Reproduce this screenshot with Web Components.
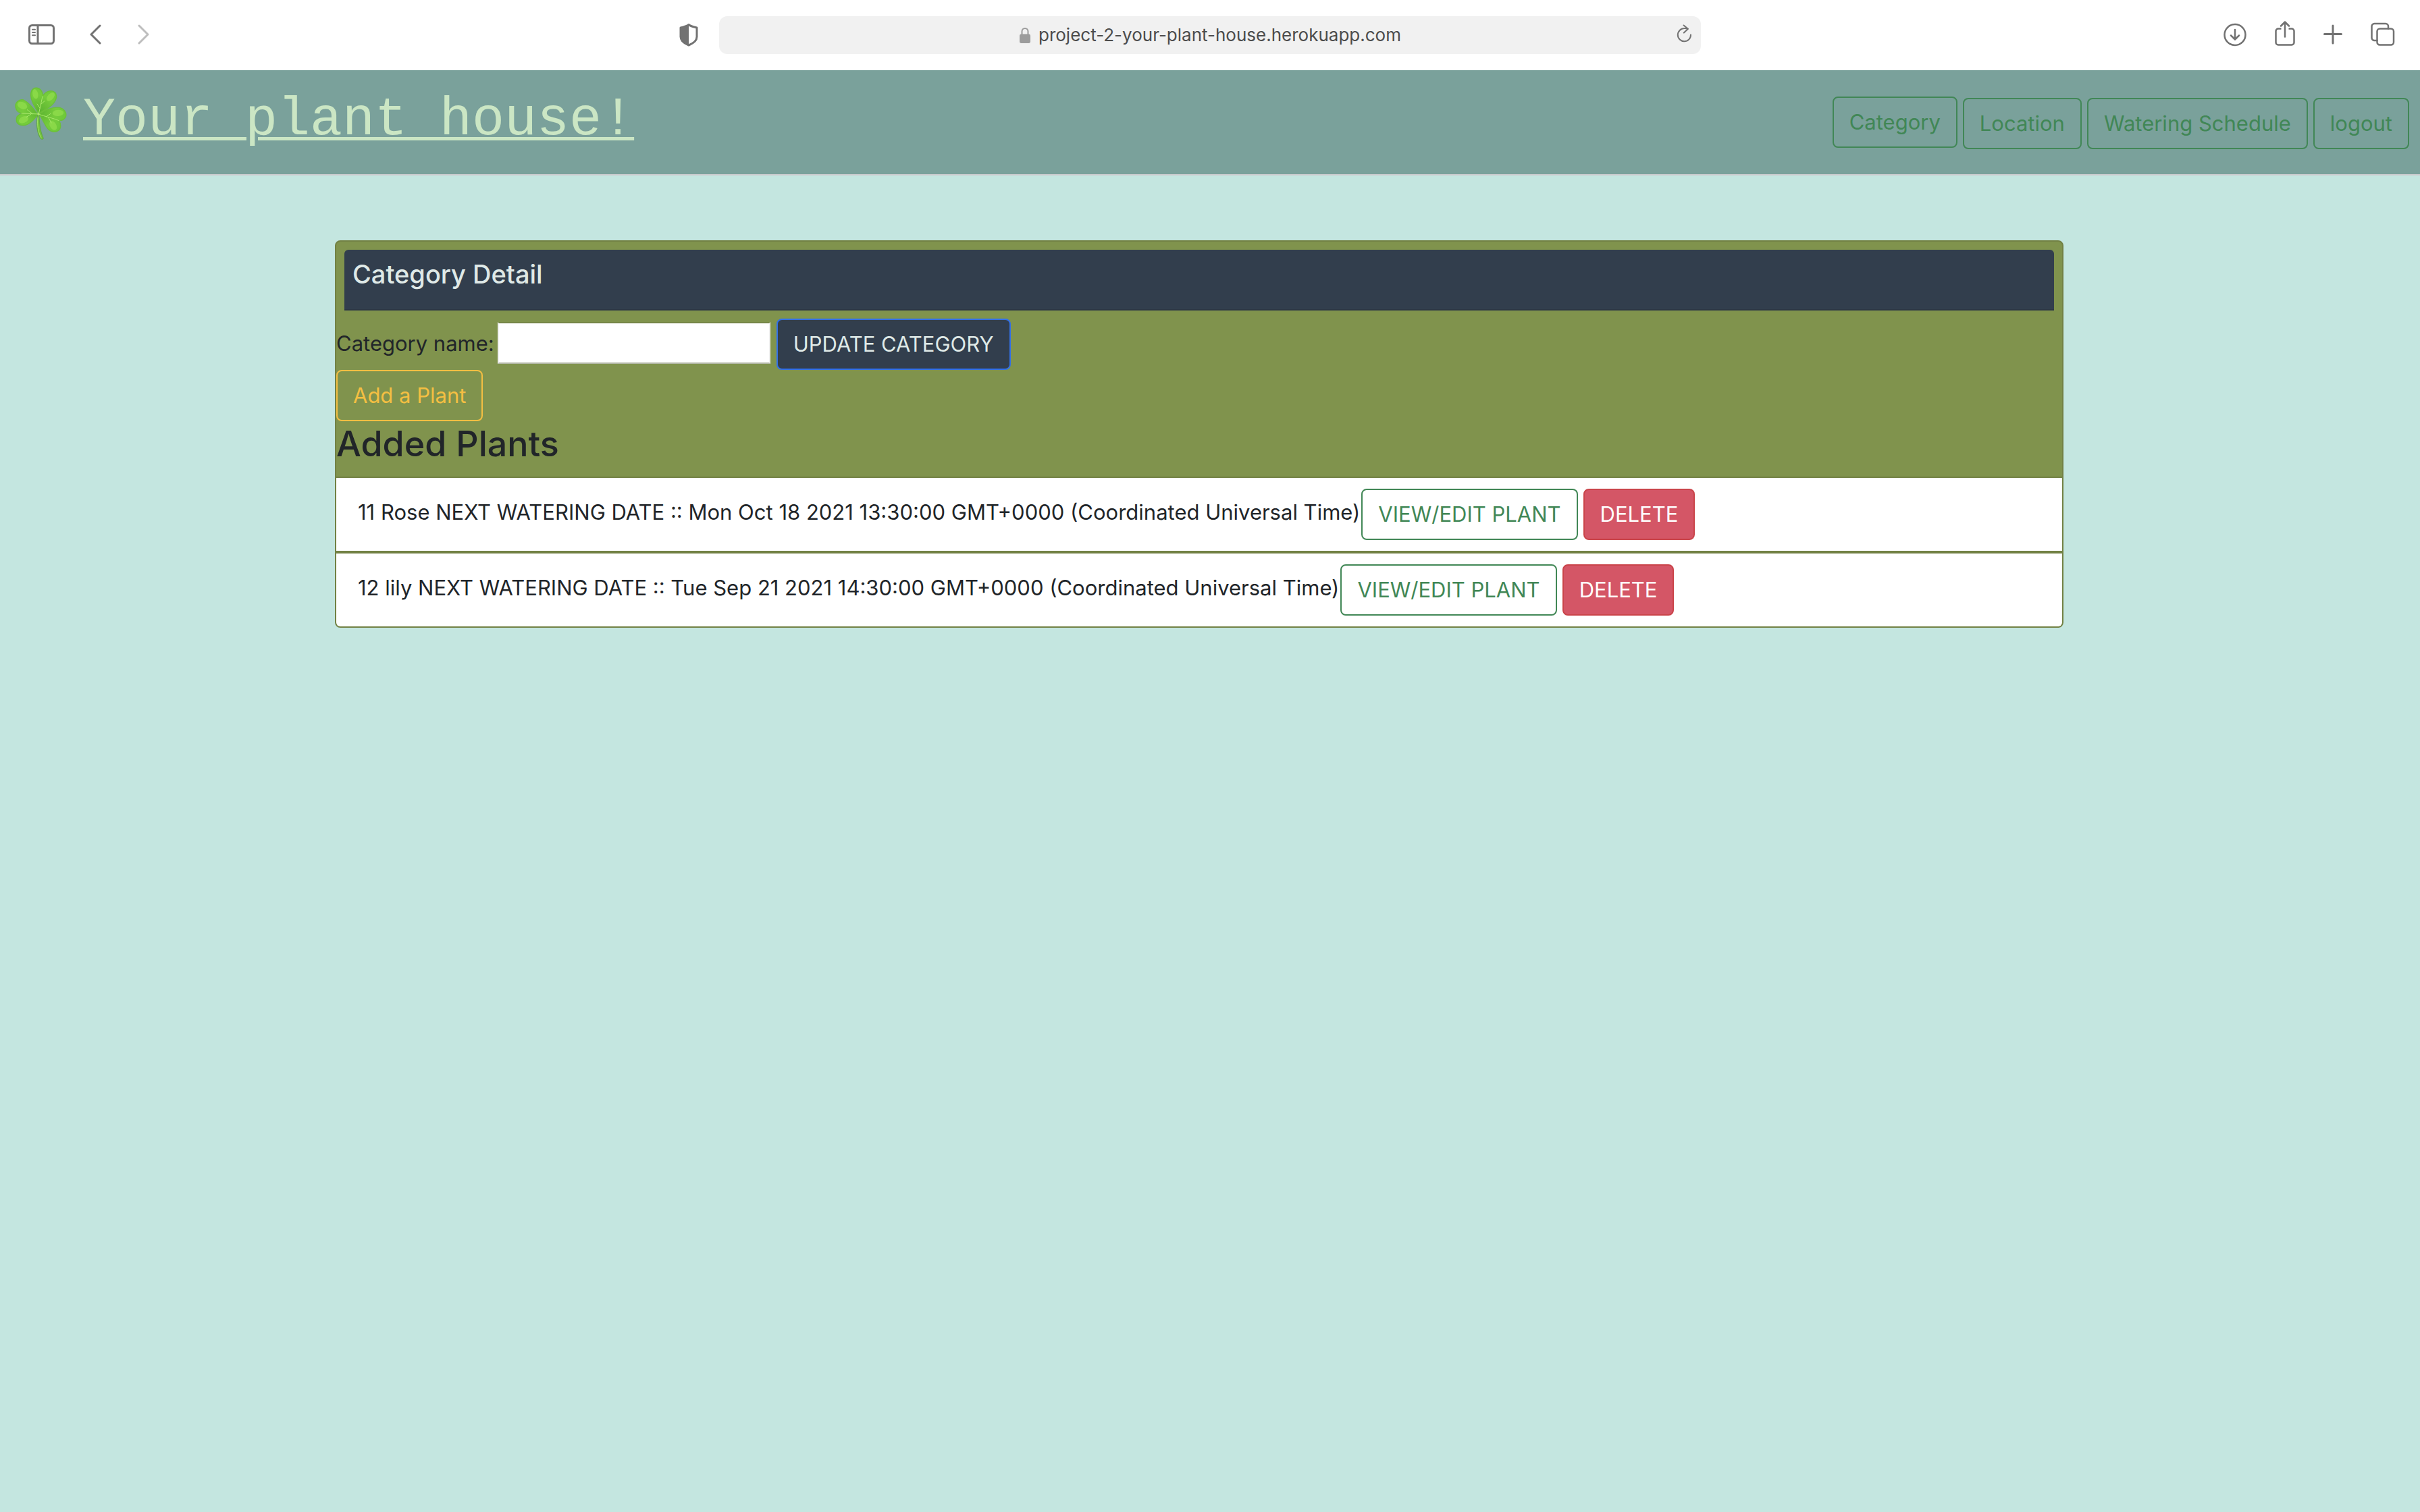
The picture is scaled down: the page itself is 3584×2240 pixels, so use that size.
<!DOCTYPE html>
<html lang="en">
<head>
<meta charset="utf-8">
<title>Your plant house!</title>
<style>
  :root {
    --ui: Inter, "Liberation Sans", sans-serif;
    --ink: #212529;
    --slate: #323e4d;
    --olive: #80934d;
    --olive-line: #728144;
    --success: #418756;
    --warning: #f4bf42;
    --pale: #dfe9e7;
  }
  html, body { margin: 0; min-height: 100%; }
  body { background: #c4e6e0; color: var(--ink); font: 400 31px/48px var(--ui); }
</style>
</head>
<body>
<plant-app></plant-app>

<script>
const define = (name, html) => {
  const template = document.createElement('template');
  template.innerHTML = html;
  customElements.define(name, class extends HTMLElement {
    constructor() {
      super();
      this.attachShadow({ mode: 'open' }).append(template.content.cloneNode(true));
    }
  });
};

/* Button in the outline, solid and danger looks */
define('plant-button', `
  <style>
    :host { display: block; flex: none; }
    button {
      display: block; box-sizing: border-box; margin: 0; padding: 12px 23px;
      border: 2px solid var(--success); border-radius: 8px; background: transparent;
      color: var(--success); font: inherit; white-space: nowrap; cursor: pointer;
    }
    :host([kind="warning"]) button { color: var(--warning); border-color: var(--warning); }
    :host([kind="primary"]) button { color: var(--pale); background: var(--slate); border-color: #3270e8; }
    :host([kind="danger"]) button { color: #fff; background: #d45666; border-color: #ca444a; }
  </style>
  <button type="button"><slot></slot></button>`);

define('browser-bar', `
  <style>
    :host {
      display: grid; grid-template-columns: 1fr minmax(0, 1454px) 1fr; align-items: center;
      height: 104px; background: #fff; color: #727272;
    }
    svg { display: block; height: 44px; fill: none; stroke: currentColor; stroke-width: 3; stroke-linecap: round; stroke-linejoin: round; }
    button { display: block; margin: 0; padding: 0; border: 0; background: none; color: inherit; }
    button:disabled { color: #bebebe; }
    .side { display: flex; align-items: center; gap: 52px; padding-left: 41px; }
    .shield { margin-left: auto; margin-right: 31px; }
    .tools { display: flex; align-items: center; justify-content: flex-end; gap: 42px; padding-right: 37px; }
    .field {
      display: grid; grid-template-columns: 1fr auto 1fr; align-items: center;
      height: 56px; border-radius: 12px; background: #f1f1f1;
    }
    .address { grid-column: 2; display: flex; align-items: center; gap: 12px; }
    .address svg { color: #9c9c9c; }
    input {
      width: 536px; height: 40px; box-sizing: border-box; margin: 0; padding: 0; border: 0; outline: 0;
      background: none; color: #4c4c4c; font: 400 26px/40px var(--ui);
    }
    .reload { justify-self: end; margin-right: 13px; }
    .reload svg { stroke-width: 2; }
  </style>
  <div class="side">
    <button aria-label="Sidebar"><svg width="40" viewBox="0 0 40 44"><rect x="2.5" y="7.5" width="36" height="27" rx="4"/><path d="M15 8v26"/><path d="M7 13.7h4M7 18h4M7 22.3h4" stroke-width="2"/></svg></button>
    <button aria-label="Back"><svg width="18" viewBox="0 0 18 44"><path d="M15 8 2 21 15 34"/></svg></button>
    <button aria-label="Forward" disabled><svg width="18" viewBox="0 0 18 44"><path d="M3 8 16 21 3 34"/></svg></button>
    <button class="shield" aria-label="Privacy report"><svg width="28" viewBox="0 0 28 44"><path d="M14 6.500C11 9 7 10 2 11V24.500C2 31 8 34.500 14 37C20 34.500 26 31 26 24.500V11C21 10 17 9 14 6.500Z"/><path d="M14 6.500C11 9 7 10 2 11V24.500C2 31 8 34.500 14 37Z" fill="currentColor" stroke="none"/></svg></button>
  </div>
  <div class="field">
    <div class="address">
      <svg width="16" viewBox="0 0 16 44"><path d="M3.500 21V16.500a4.500 4.500 0 0 1 9 0V21" stroke-width="2"/><rect x="0" y="20.500" width="16" height="13.500" rx="2.500" fill="currentColor" stroke="none"/></svg>
      <input type="text" aria-label="Address" value="project-2-your-plant-house.herokuapp.com">
    </div>
    <button class="reload" aria-label="Reload"><svg width="23" viewBox="0 0 23 44"><path d="M21 21.500A9.600 9.600 0 1 1 11.400 12.100Q14 12 17 12.800M10.500 7.500 17 12.800 10.800 18.500"/></svg></button>
  </div>
  <div class="tools">
    <button aria-label="Downloads"><svg width="34" viewBox="0 0 34 44"><circle cx="17" cy="21.500" r="15.500" stroke-width="2.500"/><path d="M17 14v14M11 22.500l6 6 6-6" stroke-width="2.500"/></svg></button>
    <button aria-label="Share"><svg width="30" viewBox="0 0 30 44"><path d="M9.500 12.500H5a3.500 3.500 0 0 0-3.500 3.500V33a3.500 3.500 0 0 0 3.500 3.500H25a3.500 3.500 0 0 0 3.500-3.500V16a3.500 3.500 0 0 0-3.500-3.500H20.500" stroke-linecap="butt" stroke-width="2.500"/><path d="M15 24.500V2.500M9 8.500 15 2.500 21 8.500" stroke-width="2.500"/></svg></button>
    <button aria-label="New tab"><svg width="28" viewBox="0 0 28 44"><path d="M14 8v26M1.500 20.500h25"/></svg></button>
    <button aria-label="Tab overview"><svg width="36" viewBox="0 0 36 44"><rect x="9.500" y="12.500" width="24.500" height="24" rx="4" stroke-width="2.500"/><path d="M9.500 30H5.500a4 4 0 0 1-4-4V9a4 4 0 0 1 4-4H22a4 4 0 0 1 4 4V12.500" stroke-width="2.500"/></svg></button>
  </div>`);

define('site-nav', `
  <style>
    :host {
      display: flex; align-items: center; justify-content: space-between;
      height: 154px; padding: 0 16px; background: #7aa19b; border-bottom: 2px solid #cccccf;
    }
    .brand { display: flex; align-items: flex-start; align-self: flex-start; gap: 19px; padding-top: 16px; }
    .brand svg { display: block; width: 88px; height: 92px; }
    a { margin-top: 13px; color: #cbe6c4; font: 400 80px/90px "Liberation Mono", monospace; text-decoration: underline; text-decoration-thickness: 5px; text-underline-offset: 4px; }
    nav { display: flex; align-items: center; gap: 8px; }
    form { margin: 0; padding-top: 4px; }
  </style>
  <div class="brand">
    <svg viewBox="48 60 264 276" aria-hidden="true">
      <defs>
        <radialGradient id="leaf" gradientUnits="userSpaceOnUse" cx="175" cy="195" r="130">
          <stop offset="0" stop-color="#5cb331"/><stop offset=".55" stop-color="#76cc3c"/><stop offset="1" stop-color="#6cc83a"/>
        </radialGradient>
      </defs>
      <g fill="url(#leaf)" stroke="#6cc038" stroke-width="4">
        <path d="M172 205C150 170 128 130 140 104C150 84 178 86 188 112C190 118 190 122 190 126C205 104 228 98 244 110C258 126 250 150 225 172C205 186 185 196 172 205Z"/>
        <path d="M168 208C155 190 130 155 104 144C84 140 66 156 69 176C72 192 84 202 100 204C84 208 70 218 73 238C78 258 104 262 124 252C146 240 160 220 168 208Z"/>
        <path d="M174 208C195 190 230 175 264 178C284 182 296 200 293 216C288 232 276 236 262 236C272 250 272 270 260 280C244 292 220 286 206 264C194 244 184 222 174 208Z"/>
      </g>
      <g fill="#96e04f" opacity=".65">
        <ellipse cx="157" cy="118" rx="12" ry="22" transform="rotate(-12 157 118)"/>
        <ellipse cx="225" cy="130" rx="13" ry="23" transform="rotate(42 225 130)"/>
        <ellipse cx="99" cy="169" rx="23" ry="15" transform="rotate(25 99 169)"/>
        <ellipse cx="105" cy="232" rx="23" ry="14" transform="rotate(-25 105 232)"/>
        <ellipse cx="258" cy="202" rx="25" ry="14" transform="rotate(-4 258 202)"/>
        <ellipse cx="236" cy="258" rx="14" ry="22" transform="rotate(-32 236 258)"/>
      </g>
      <path d="M167 208C160 250 163 290 180 316C184 320 192 320 193 315C182 290 175 262 174 208Z" fill="#72c23e" stroke="#559f34" stroke-width="2"/>
      <path d="M168 222C164 255 170 290 184 314" fill="none" stroke="#a5e368" stroke-width="3"/>
      <path d="M172 206L189 128M172 207L96 204M173 208C200 218 235 224 262 236M177 180l-12-18M180 165l18-16M145 206l-24-18M138 207l-22 14M205 219l20-14M215 222l13 24" fill="none" stroke="#a9e86c" stroke-width="3" stroke-linecap="round"/>
      <circle cx="171" cy="207" r="5" fill="#a9e86c"/>
    </svg>
    <a href="#">Your plant house!</a>
  </div>
  <nav>
    <plant-button>Category</plant-button>
    <form><plant-button>Location</plant-button></form>
    <form><plant-button>Watering Schedule</plant-button></form>
    <form><plant-button>logout</plant-button></form>
  </nav>`);

define('plant-row', `
  <style>
    :host { display: flex; align-items: center; gap: 8px; padding: 16px 32px; background: #fff; }
    :host(:not(:last-child)) { border-bottom: 4px solid var(--olive-line); }
    p { margin: 0 -6px 0 0; padding-bottom: 6px; }
  </style>
  <p><slot></slot></p>
  <plant-button>VIEW/EDIT PLANT</plant-button>
  <plant-button kind="danger">DELETE</plant-button>`);

define('category-card', `
  <style>
    :host {
      display: block; overflow: hidden; background: var(--olive);
      border: 2px solid var(--olive-line); border-radius: 8px;
    }
    header { margin: 12px; padding: 12px 12px 28px; background: var(--slate); border-bottom: 2px solid #2c3644; border-radius: 6px 6px 0 0; }
    h5 { margin: 0; color: var(--pale); font-size: 38px; font-weight: 500; line-height: 48px; }
    form { display: flex; align-items: center; gap: 9px; margin: 0; }
    .name { display: flex; align-items: baseline; gap: 5px; padding-bottom: 4px; }
    input {
      box-sizing: border-box; width: 404px; height: 62px; margin: 0; padding: 2px; border: 2px solid;
      border-color: #758547 #f0f0f0 #b5b9a9 #f0f0f0; background: #fff; color: inherit; font: inherit; outline: 0;
    }
    .add { display: flex; }
    h2 { margin: 0 0 14px; font-size: 52px; font-weight: 500; line-height: 68px; }
    .list { border-top: 2px solid var(--olive-line); }
  </style>
  <header><h5>Category Detail</h5></header>
  <form>
    <div class="name"><label for="name">Category name:</label><input id="name" type="text"></div>
    <plant-button kind="primary">UPDATE CATEGORY</plant-button>
  </form>
  <div class="add"><plant-button kind="warning">Add a Plant</plant-button></div>
  <h2>Added Plants</h2>
  <div class="list">
    <plant-row>11 Rose NEXT WATERING DATE :: Mon Oct 18 2021 13:30:00 GMT+0000 (Coordinated Universal Time)</plant-row>
    <plant-row>12 lily NEXT WATERING DATE :: Tue Sep 21 2021 14:30:00 GMT+0000 (Coordinated Universal Time)</plant-row>
  </div>`);

define('plant-app', `
  <style>
    :host { display: block; }
    main { max-width: 2592px; margin: 96px auto 0; }
    category-card { margin-right: 32px; }
  </style>
  <browser-bar></browser-bar>
  <site-nav></site-nav>
  <main><category-card></category-card></main>`);
</script>
</body>
</html>
